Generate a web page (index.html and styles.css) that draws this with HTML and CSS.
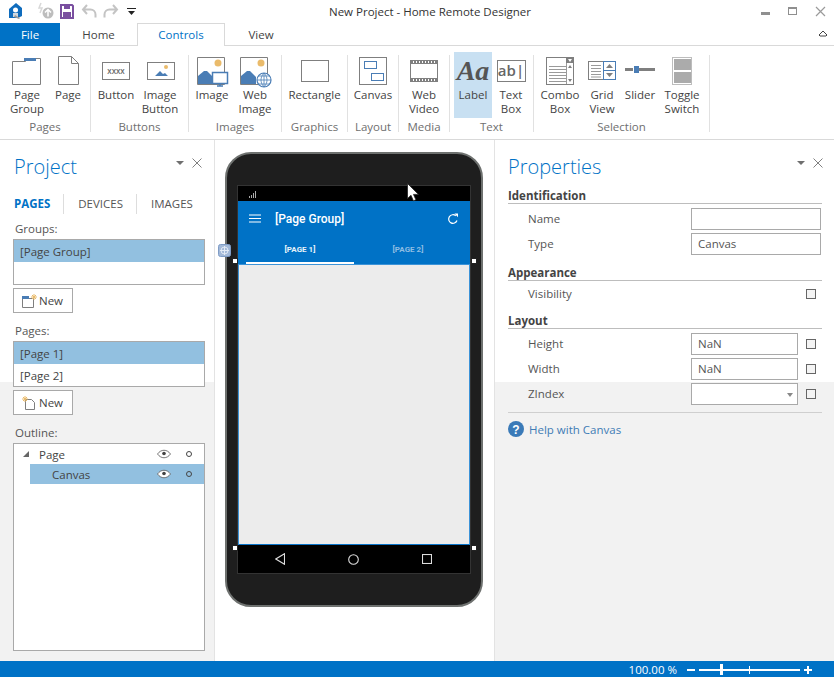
FILE: index.html
```html
<!DOCTYPE html>
<html lang="en">
<head>
<meta charset="utf-8">
<title>New Project - Home Remote Designer</title>
<link rel="stylesheet" href="styles.css">
</head>
<body>
<div class="app">
  <header class="titlebar">
    <div class="qat">
      <svg class="qat-icons" width="140" height="24" viewBox="0 0 140 24">
        <path d="M9 9l7-6 6 5v8l-4 2h-9z" fill="#0f6cbd"/><circle cx="15.500" cy="10" r="2.500" fill="#fff"/><path d="M13 13h5v4h-5z" fill="#cfd8e0"/><path d="M15 15l5 3-1 1-5-2z" fill="#9a9a9a"/>
        <path d="M41 3l-2 5h3l-2 5" fill="none" stroke="#d8d8d8" stroke-width="1.500"/><circle cx="48" cy="13" r="5.500" fill="#bdbdbd"/><path d="M48 16.500v-6M45 12.500l3-3 3 3" fill="none" stroke="#fff" stroke-width="1.500"/>
        <path d="M61 5h11l1 1v12h-12z" fill="#fff" stroke="#7a4fa0" stroke-width="2"/><rect x="64" y="4" width="6" height="5" fill="#7a4fa0"/><rect x="63" y="12" width="8" height="6" fill="#7a4fa0"/>
        <path d="M87 5l-4 4.500 4 4.500M83 9.500h7.500a5 5 0 0 1 5 5v3" fill="none" stroke="#c4c4c4" stroke-width="2"/>
        <path d="M113 5l4 4.500-4 4.500M117 9.500h-7.500a5 5 0 0 0-5 5v3" fill="none" stroke="#c4c4c4" stroke-width="2"/>
        <path d="M127 8h9v1h-9zM128 11h7l-3.500 4z" fill="#222"/>
      </svg>
    </div>
    <div class="title">New Project - Home Remote Designer</div>
    <div class="winctl">
      <svg width="74" height="24" viewBox="0 0 74 24">
        <rect x="2" y="12" width="9" height="3" fill="#8f8f8f"/>
        <rect x="29.500" y="7.500" width="8" height="7" fill="none" stroke="#8f8f8f"/><rect x="29" y="7" width="9" height="2" fill="#8f8f8f"/>
        <path d="M57 7l9 9M66 7l-9 9" stroke="#9a9a9a" stroke-width="1.200"/>
      </svg>
    </div>
  </header>

  <nav class="tabs">
    <div class="tab tab-file">File</div>
    <div class="tab tab-home">Home</div>
    <div class="tab tab-active">Controls</div>
    <div class="tab tab-view">View</div>
    <svg class="collapse" width="10" height="8" viewBox="0 0 10 8"><path d="M1 6l4-4 4 4-1 1H2z" fill="none" stroke="#444"/></svg>
  </nav>

  <section class="ribbon">
    <div class="group g-pages">
      <div class="items">
        <div class="item w38">
          <svg class="ico" viewBox="0 0 36 36"><path d="M3.500 32.500v-23h13l3-3h12v26z" fill="#fff" stroke="#7f7f7f"/><rect x="15" y="6" width="12" height="3" fill="#4a7db5"/></svg>
          <div class="cap">Page<br>Group</div>
        </div>
        <div class="item w44">
          <svg class="ico" viewBox="0 0 36 36"><path d="M8.500 4.500h13l7 7v21h-20zM21.500 4.500v7h7" fill="#fff" stroke="#7f7f7f"/></svg>
          <div class="cap">Page</div>
        </div>
      </div>
      <div class="glabel">Pages</div>
    </div>
    <div class="group g-buttons">
      <div class="items">
        <div class="item w46">
          <svg class="ico" viewBox="0 0 36 36"><rect x="4.500" y="10.500" width="27" height="17" fill="#fff" stroke="#7f7f7f"/><text x="18" y="22" class="xxxx" text-anchor="middle">XXXX</text></svg>
          <div class="cap">Button</div>
        </div>
        <div class="item w42">
          <svg class="ico" viewBox="0 0 36 36"><rect x="5.500" y="10.500" width="27" height="17" fill="#fff" stroke="#7f7f7f"/><circle cx="24" cy="15" r="2" fill="#eabb6b"/><path d="M13 24l5-5 3 3 2-1 3 3z" fill="#4a7db5"/></svg>
          <div class="cap">Image<br>Button</div>
        </div>
      </div>
      <div class="glabel">Buttons</div>
    </div>
    <div class="group g-images">
      <div class="items">
        <div class="item w38">
          <svg class="ico" viewBox="0 0 36 36"><path d="M3.500 5.500h27v27h-27z" fill="#fff" stroke="#7f7f7f"/><circle cx="24" cy="11" r="3.500" fill="#eabb6b"/><path d="M4 32V24l6-5h3l6 6v7z" fill="#4a7db5"/><rect x="18.500" y="20.500" width="15" height="11" fill="#fff" stroke="#4a7db5" stroke-width="1.500"/><path d="M23 34h6M26 32v2" stroke="#4a7db5" stroke-width="1.500"/></svg>
          <div class="cap">Image</div>
        </div>
        <div class="item w48">
          <svg class="ico" viewBox="0 0 36 36"><path d="M3.500 5.500h27v27h-27z" fill="#fff" stroke="#7f7f7f"/><circle cx="24" cy="11" r="3.500" fill="#eabb6b"/><path d="M4 32V24l6-5h3l6 6v7z" fill="#4a7db5"/><circle cx="27" cy="28" r="7" fill="#fff" stroke="#4a7db5" stroke-width="1.200"/><path d="M20 28h14M27 21v14M21.500 24h11M21.500 32h11M27 21c-4 4-4 10 0 14M27 21c4 4 4 10 0 14" fill="none" stroke="#4a7db5" stroke-width=".8"/></svg>
          <div class="cap">Web<br>Image</div>
        </div>
      </div>
      <div class="glabel">Images</div>
    </div>
    <div class="group g-graphics">
      <div class="items">
        <div class="item w65">
          <svg class="ico" viewBox="0 0 36 36"><rect x="4.500" y="8.500" width="27" height="21" fill="#fff" stroke="#7f7f7f"/></svg>
          <div class="cap">Rectangle</div>
        </div>
      </div>
      <div class="glabel">Graphics</div>
    </div>
    <div class="group g-layout">
      <div class="items">
        <div class="item w50">
          <svg class="ico" viewBox="0 0 36 36"><rect x="4.500" y="5.500" width="27" height="27" fill="#fff" stroke="#7f7f7f"/><rect x="9.500" y="9.500" width="12" height="7" fill="#fff" stroke="#4a7db5"/><rect x="16.500" y="21.500" width="12" height="7" fill="#fff" stroke="#4a7db5"/></svg>
          <div class="cap">Canvas</div>
        </div>
      </div>
      <div class="glabel">Layout</div>
    </div>
    <div class="group g-media">
      <div class="items">
        <div class="item w50">
          <svg class="ico" viewBox="0 0 36 36"><rect x="4.500" y="8.500" width="27" height="21" fill="#fff" stroke="#7f7f7f"/><path d="M4 11.500h28M4 26.500h28" stroke="#7f7f7f"/><path d="M5 10h26M5 28h26" stroke="#7f7f7f" stroke-width="2" stroke-dasharray="2 1"/></svg>
          <div class="cap">Web<br>Video</div>
        </div>
      </div>
      <div class="glabel">Media</div>
    </div>
    <div class="group g-text">
      <div class="items">
        <div class="item w38 selected">
          <div class="aa">Aa</div>
          <div class="cap">Label</div>
        </div>
        <div class="item w38">
          <div class="abbox">ab|</div>
          <div class="cap">Text<br>Box</div>
        </div>
      </div>
      <div class="glabel">Text</div>
    </div>
    <div class="group g-selection">
      <div class="items">
        <div class="item w44">
          <svg class="ico" viewBox="0 0 36 36"><rect x="4.500" y="5.500" width="27" height="27" fill="#fff" stroke="#7f7f7f"/><path d="M7 14.500h17M7 17.500h17M7 20.500h17M7 23.500h17M7 26.500h17M7 29.500h17M24.500 6v26" stroke="#9a9a9a"/><rect x="24" y="5" width="8" height="6" fill="#7f7f7f"/><path d="M26 7h4l-2 3z" fill="#fff"/><path d="M26 16l2-3 2 3zM26 27l2 3 2-3z" fill="#7f7f7f"/></svg>
          <div class="cap">Combo<br>Box</div>
        </div>
        <div class="item w40">
          <svg class="ico" viewBox="0 0 36 36"><rect x="4.500" y="9.500" width="27" height="18" fill="#fff" stroke="#7f7f7f"/><path d="M7 13.500h10M7 16.500h10M7 19.500h10M7 22.500h10M7 25h10" stroke="#9a9a9a"/><rect x="19.500" y="9.500" width="12" height="18" fill="#fff" stroke="#4a7db5"/><path d="M20 18.500h11" stroke="#4a7db5"/><path d="M22 16l3.500-4 3.500 4zM22 21l3.500 4 3.500-4z" fill="#7f7f7f"/></svg>
          <div class="cap">Grid<br>View</div>
        </div>
        <div class="item w36">
          <svg class="ico" viewBox="0 0 36 36"><rect x="3" y="16" width="8" height="3" fill="#7f7f7f"/><rect x="17" y="16" width="16" height="3" fill="#7f7f7f"/><rect x="12" y="14" width="5" height="7" fill="#4a7db5"/></svg>
          <div class="cap">Slider</div>
        </div>
        <div class="item w48">
          <svg class="ico" viewBox="0 0 36 36"><rect x="8.500" y="5.500" width="19" height="27" fill="#fff" stroke="#bdbdbd"/><rect x="10" y="7" width="17" height="11" fill="#ababab"/><rect x="10" y="20" width="17" height="11" fill="#ababab"/></svg>
          <div class="cap">Toggle<br>Switch</div>
        </div>
      </div>
      <div class="glabel">Selection</div>
    </div>
  </section>

  <main class="workspace">
    <aside class="project">
      <div class="panel-head">
        <h2 class="panel-title">Project</h2>
        <div class="panel-btns"><span class="drop"></span><svg class="close" width="10" height="10" viewBox="0 0 10 10"><path d="M.5.500l9 9M9.500.500l-9 9" stroke="#808080"/></svg></div>
      </div>
      <div class="ptabs">
        <span class="ptab ptab-on">PAGES</span>
        <span class="ptab">DEVICES</span>
        <span class="ptab ptab-last">IMAGES</span>
      </div>
      <div class="flabel">Groups:</div>
      <div class="list">
        <div class="row sel">[Page Group]</div>
        <div class="row"></div>
      </div>
      <div class="newbtn">
        <svg width="16" height="16" viewBox="0 0 16 16"><path d="M1.500 5.500h11v9h-11z" fill="#fff" stroke="#7f7f7f"/><rect x="1" y="3" width="7" height="3" fill="#4a7db5"/><path d="M13 1v6M10 4h6M11 2l4 4M15 2l-4 4" stroke="#eabb6b"/></svg>
        <span>New</span>
      </div>
      <div class="flabel fl-pages">Pages:</div>
      <div class="list">
        <div class="row sel">[Page 1]</div>
        <div class="row">[Page 2]</div>
      </div>
      <div class="newbtn">
        <svg width="16" height="16" viewBox="0 0 16 16"><path d="M4.500 4.500h6l3 3v7h-9z" fill="#fff" stroke="#7f7f7f"/><path d="M4 1v6M1 4h6M2 2l4 4M6 2l-4 4" stroke="#eabb6b"/></svg>
        <span>New</span>
      </div>
      <div class="flabel fl-outline">Outline:</div>
      <div class="tree">
        <div class="node">
          <span class="twist"></span><span class="node-name">Page</span>
          <svg class="eye" width="14" height="10" viewBox="0 0 14 10"><path d="M.5 5c3.500-5 9.500-5 13 0-3.500 5-9.500 5-13 0z" fill="#fff" stroke="#555" stroke-width=".8"/><circle cx="7" cy="4.500" r="1.800" fill="#444"/></svg>
          <span class="dot"></span>
        </div>
        <div class="node node-sel">
          <span class="node-name">Canvas</span>
          <svg class="eye" width="14" height="10" viewBox="0 0 14 10"><path d="M.5 5c3.500-5 9.500-5 13 0-3.500 5-9.500 5-13 0z" fill="#fff" stroke="#555" stroke-width=".8"/><circle cx="7" cy="4.500" r="1.800" fill="#444"/></svg>
          <span class="dot"></span>
        </div>
      </div>
    </aside>

    <section class="stage">
      <div class="phone">
        <div class="screen">
          <div class="statusbar">
            <svg width="7" height="7" viewBox="0 0 7 7"><path d="M0 5h1v2H0zM2 4h1v3H2zM4 2h1v5H4zM6 0h1v7H6z" fill="#aaa"/></svg>
          </div>
          <div class="appbar">
            <div class="appbar-top">
              <svg class="burger" width="12" height="9" viewBox="0 0 12 9"><path d="M0 1h12M0 4.500h12M0 8h12" stroke="#fff" stroke-width="1.200"/></svg>
              <span class="app-title">[Page Group]</span>
              <svg class="refresh" width="12" height="12" viewBox="0 0 12 12"><path d="M10 7.500A4.300 4.300 0 1 1 8.800 2.800" fill="none" stroke="#fff" stroke-width="1.200"/><path d="M7.500 0.500h3.500v3.800z" fill="#fff"/></svg>
            </div>
            <div class="apptabs">
              <span class="apptab apptab-on">[PAGE 1]</span>
              <span class="apptab">[PAGE 2]</span>
            </div>
          </div>
          <div class="canvas"></div>
          <div class="navbar">
            <svg width="10" height="12" viewBox="0 0 10 12"><path d="M9.500 .7v10.600L.8 6z" fill="none" stroke="#ddd" stroke-width="1.100"/></svg>
            <svg width="11" height="11" viewBox="0 0 11 11"><circle cx="5.500" cy="5.500" r="4.800" fill="none" stroke="#ddd" stroke-width="1.100"/></svg>
            <svg width="10" height="10" viewBox="0 0 10 10"><rect x=".5" y=".5" width="9" height="9" fill="none" stroke="#ddd" stroke-width="1.100"/></svg>
          </div>
        </div>
      </div>
      <span class="handle h-tl"></span>
      <span class="handle h-tr"></span>
      <span class="handle h-bl"></span>
      <span class="handle h-br"></span>
      <svg class="movegrip" width="13" height="13" viewBox="0 0 13 13"><rect x=".5" y=".5" width="12" height="12" rx="2" fill="#a3b9d8" stroke="#7f9cc6"/><circle cx="6.500" cy="6.500" r="3.500" fill="none" stroke="#e4ebf5"/><path d="M6.500 2v9M2 6.500h9" stroke="#e4ebf5"/></svg>
      <svg class="cursor" width="13" height="19" viewBox="0 0 13 19"><path d="M.5.500v15l3.500-3.200 2.400 5.500 2.500-1-2.400-5.400h5z" fill="#fff" stroke="#222" stroke-width=".8"/></svg>
    </section>

    <aside class="props">
      <div class="panel-head">
        <h2 class="panel-title">Properties</h2>
        <div class="panel-btns"><span class="drop"></span><svg class="close" width="10" height="10" viewBox="0 0 10 10"><path d="M.5.500l9 9M9.500.500l-9 9" stroke="#808080"/></svg></div>
      </div>
      <div class="sect sect-first">Identification</div>
      <div class="prow"><span class="plabel">Name</span><span class="pinput pwide"></span></div>
      <div class="prow"><span class="plabel">Type</span><span class="pinput pwide">Canvas</span></div>
      <div class="sect sect-app">Appearance</div>
      <div class="prow prow-vis"><span class="plabel">Visibility</span><span class="check"></span></div>
      <div class="sect sect-lay">Layout</div>
      <div class="prow"><span class="plabel">Height</span><span class="pinput">NaN</span><span class="check"></span></div>
      <div class="prow"><span class="plabel">Width</span><span class="pinput">NaN</span><span class="check"></span></div>
      <div class="prow"><span class="plabel">ZIndex</span><span class="pinput pcombo"><i class="caret"></i></span><span class="check"></span></div>
      <div class="help">
        <svg width="16" height="16" viewBox="0 0 16 16"><circle cx="8" cy="8" r="8" fill="#3a7ab8"/><text x="8" y="12.500" class="qmark" text-anchor="middle">?</text></svg>
        <span>Help with Canvas</span>
      </div>
    </aside>
  </main>

  <footer class="status">
    <span class="zoomval">100.00 %</span>
    <svg width="126" height="16" viewBox="0 0 126 16">
      <path d="M0 9h8M12 9h101" stroke="#fff" stroke-width="2"/>
      <rect x="33" y="3" width="3" height="11" fill="#fff"/>
      <rect x="62" y="5" width="1" height="8" fill="#fff"/>
      <path d="M117 9h8M121 5v8" stroke="#fff" stroke-width="2"/>
    </svg>
  </footer>
</div>
</body>
</html>
```

FILE: styles.css
```css
* { box-sizing: border-box; }
html, body { margin: 0; padding: 0; }
body {
  width: 834px;
  height: 677px;
  overflow: hidden;
  font-family: "Open Sans", "Noto Sans", "Liberation Sans", sans-serif;
  font-size: 11.5px;
  color: #444;
  background: #fff;
}
.app { display: flex; flex-direction: column; height: 677px; }

/* Title bar */
.titlebar { height: 23px; display: flex; position: relative; flex: none; }
.qat { width: 140px; }
.qat-icons { display: block; }
.title {
  flex: 1;
  text-align: center;
  line-height: 23px;
  font-size: 11.5px;
  color: #333;
  padding-right: 40px;
}
.winctl { width: 74px; }
.winctl svg { display: block; margin-left: -1px; }

/* Tabs */
.tabs {
  height: 23px;
  flex: none;
  display: flex;
  position: relative;
  border-bottom: 1px solid #d9d9d9;
}
.tab { font-size: 11.5px; line-height: 23px; text-align: center; color: #444; }
.tab-file { width: 60px; height: 23px; background: #0072c6; color: #fff; }
.tab-home { width: 77px; }
.tab-active {
  width: 88px;
  height: 23px;
  color: #0072c6;
  background: #fff;
  border: 1px solid #d9d9d9;
  border-bottom: 0;
  line-height: 21px;
}
.tab-view { width: 72px; }
.collapse { position: absolute; right: 6px; top: 6px; }

/* Ribbon */
.ribbon {
  height: 94px;
  flex: none;
  display: flex;
  align-items: flex-start;
  padding-top: 9px;
  border-bottom: 1px solid #d9d9d9;
}
.group {
  height: 77px;
  flex: none;
  display: flex;
  flex-direction: column;
  border-right: 1px solid #e1e1e1;
}
.items { display: flex; height: 66px; margin-top: -3px; flex: none; }
.g-pages { width: 91px; }
.g-pages .items { padding-left: 8px; }
.g-buttons { width: 98px; }
.g-buttons .items { padding-left: 2px; }
.g-images { width: 93px; }
.g-images .items { padding-left: 4px; }
.g-graphics { width: 66px; }
.g-layout { width: 51px; }
.g-media { width: 51px; }
.g-text { width: 84px; }
.g-text .items { padding-left: 4px; }
.g-selection { width: 176px; }
.g-selection .items { padding-left: 4px; }
.item { display: flex; flex-direction: column; align-items: center; flex: none; }
.w36 { width: 36px; }
.w38 { width: 38px; }
.w40 { width: 40px; }
.w42 { width: 42px; }
.w44 { width: 44px; }
.w46 { width: 46px; }
.w48 { width: 48px; }
.w50 { width: 50px; }
.w65 { width: 65px; }
.selected { background: #c8e0f2; }
.ico { width: 36px; height: 36px; flex: none; display: block; }
.cap {
  line-height: 14px;
  font-size: 11.5px;
  text-align: center;
  color: #444;
  white-space: nowrap;
}
.glabel {
  height: 14px;
  line-height: 18px;
  text-align: center;
  color: #6f6f6f;
  font-size: 11.5px;
  white-space: nowrap;
}
.xxxx { font: 6.5px "Liberation Sans", sans-serif; fill: #666; font-weight: 700; }
.aa {
  height: 36px;
  width: 38px;
  font: italic 700 28px/38px "Liberation Serif", serif;
  color: #555;
  text-align: center;
  flex: none;
}
.abbox {
  margin-top: 8px;
  margin-bottom: 6px;
  width: 29px;
  height: 22px;
  flex: none;
  border: 1px solid #7f7f7f;
  font: 600 15px/19px "Open Sans", sans-serif;
  color: #666;
  text-align: center;
  background: #fff;
}

/* Workspace */
.workspace { flex: 1; display: flex; min-height: 0; }
.project, .props { background: linear-gradient(#fff 242px, #f2f2f2 242px); }
.project { width: 215px; flex: none; border-right: 1px solid #e3e3e3; padding: 0 9px 0 13px; }
.panel-head { display: flex; align-items: flex-start; justify-content: space-between; height: 39px; padding-top: 11px; }
.panel-title {
  margin: 1px 0 0 1px;
  font-weight: 300;
  font-size: 20px;
  line-height: 30px;
  color: #0072c6;
}
.panel-btns { display: flex; align-items: center; gap: 8px; height: 24px; margin-right: 3px; }
.drop { width: 0; height: 0; border: 4px solid transparent; border-top: 4px solid #6f6f6f; border-bottom: 0; }
.close { display: block; flex: none; }
.ptabs { display: flex; align-items: center; height: 20px; margin-top: 15px; margin-left: 1px; }
.ptab {
  font-size: 11.5px;
  color: #555;
  padding: 0 13px 0 14px;
  border-right: 1px solid #ddd;
  line-height: 20px;
}
.ptab-on { color: #0072c6; font-weight: 700; padding-left: 0; }
.ptab-last { border-right: 0; }
.flabel { line-height: 16px; margin-top: 7px; margin-left: 2px; color: #555; height: 16px; }
.fl-pages { margin-top: 10px; }
.fl-outline { margin-top: 10px; }
.list { border: 1px solid #a9a9a9; background: #fff; width: 192px; height: 46px; margin-top: 2px; }
.row { height: 22px; line-height: 24px; padding-left: 6px; color: #444; }
.sel { background: #92c0e0; }
.newbtn {
  width: 60px;
  height: 25px;
  margin-top: 3px;
  border: 1px solid #a9a9a9;
  background: #fff;
  display: flex;
  align-items: center;
  padding-left: 7px;
  gap: 2px;
  color: #444;
}
.tree { border: 1px solid #a9a9a9; background: #fff; width: 192px; height: 208px; margin-top: 2px; }
.node { height: 20px; display: flex; align-items: center; position: relative; padding-right: 12px; }
.node-sel { background: #92c0e0; margin-left: 16px; }
.twist {
  width: 0; height: 0;
  margin-left: 9px;
  margin-right: 10px;
  border-style: solid;
  border-width: 0 0 6px 6px;
  border-color: transparent transparent #666 transparent;
}
.node-name { flex: 1; }
.node-sel .node-name { padding-left: 22px; }
.eye { margin-right: 15px; flex: none; }
.dot { width: 6px; height: 6px; border: 1px solid #444; border-radius: 50%; flex: none; }

/* Stage */
.stage { flex: 1; position: relative; padding: 12px 0 0 10px; min-width: 0; }
.phone {
  width: 258px;
  height: 455px;
  background: #1e1e1e;
  border: 2px solid #6e716f;
  border-radius: 26px;
  padding: 31px 10px 0;
}
.screen { width: 234px; height: 389px; background: #000; border: 1px solid #333; display: flex; flex-direction: column; }
.statusbar { height: 15px; flex: none; padding-left: 11px; display: flex; align-items: center; padding-top: 2px; }
.appbar { background: #0072c6; height: 63px; flex: none; color: #fff; }
.appbar-top { height: 35px; display: flex; align-items: center; padding: 0 11px; }
.burger { flex: none; margin-right: 14px; }
.app-title { flex: 1; font: 500 12px "Roboto", sans-serif; }
.refresh { flex: none; }
.apptabs { display: flex; height: 28px; padding: 0 8px; }
.apptab {
  width: 108px;
  text-align: center;
  font: 700 8px/27px "Roboto", sans-serif;
  color: #8fbde3;
}
.apptab-on { color: #e8f2fa; border-bottom: 2px solid #fff; height: 28px; }
.canvas { height: 281px; flex: none; background: #ececec; border: 1px solid #0072c6; border-color: #3b93d8 #3b93d8 #0a74c8; margin-top: 0; }
.navbar { flex: 1; display: flex; align-items: center; justify-content: space-between; padding: 0 38px 0 37px; }
.handle { position: absolute; width: 6px; height: 6px; background: #fff; border: 1px solid #222; }
.h-tl { left: 17px; top: 118px; }
.h-tr { left: 256px; top: 118px; }
.h-bl { left: 17px; top: 405px; }
.h-br { left: 256px; top: 405px; }
.movegrip { position: absolute; left: 3px; top: 104px; }
.cursor { position: absolute; left: 192px; top: 43px; }

/* Properties */
.props { width: 340px; flex: none; border-left: 1px solid #e3e3e3; padding: 0 12px 0 13px; }
.props .panel-head { height: 43px; margin-right: -4px; }
.props .panel-title { margin-left: 0; }
.sect {
  font-weight: 700;
  font-size: 11.5px;
  color: #444;
  line-height: 20px;
  height: 18px;
  border-bottom: 1px solid #bdbdbd;
  margin-bottom: 4px;
  margin-top: 3px;
}
.sect-app { margin-top: 5px; margin-bottom: 2px; }
.sect-lay { margin-top: 6px; }
.prow { display: flex; align-items: flex-start; height: 25px; padding-left: 20px; }
.prow-vis { height: 22px; }
.plabel { width: 163px; flex: none; color: #555; line-height: 22px; }
.pinput {
  width: 107px;
  height: 22px;
  flex: none;
  border: 1px solid #a9a9a9;
  background: #fff;
  line-height: 20px;
  padding-left: 6px;
  position: relative;
  color: #555;
}
.pwide { width: 130px; }
.check { width: 10px; height: 10px; flex: none; border: 1px solid #666; background: #f4f4f4; margin: 6px 0 0 8px; }
.prow-vis .check { margin-left: 115px; }
.caret { position: absolute; right: 4px; top: 9px; width: 0; height: 0; border: 3px solid transparent; border-top: 4px solid #888; border-bottom: 0; }
.help {
  display: flex;
  align-items: center;
  gap: 5px;
  margin-top: 4px;
  padding-top: 8px;
  border-top: 1px solid #cfcfcf;
  color: #3f7cb5;
}
.qmark { font: 700 12px "Liberation Sans", sans-serif; fill: #fff; }

/* Status bar */
.status {
  height: 16px;
  flex: none;
  background: #0072c6;
  color: #fff;
  display: flex;
  align-items: center;
  justify-content: flex-end;
  padding-right: 21px;
  gap: 10px;
  font-size: 11.5px;
}
.status svg { display: block; }
```
